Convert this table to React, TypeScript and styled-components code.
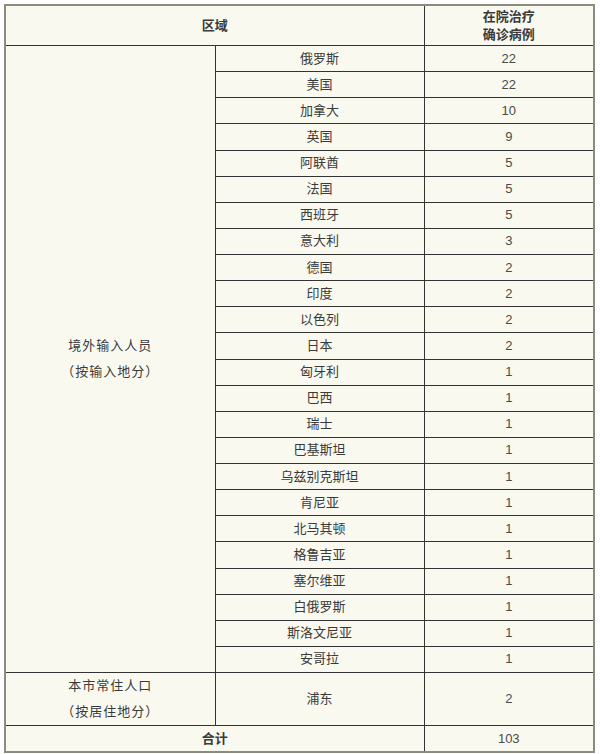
import styled, { createGlobalStyle } from 'styled-components';

const GlobalStyle = createGlobalStyle`
  body {
    margin: 0;
    background: #ffffff;
    font-family: "Liberation Sans", "Noto Sans CJK SC", sans-serif;
  }
`

const Page = styled.div`
  padding: 4px 5px 4px 4px;
`

const Table = styled.table`
  width: 591px;
  border-collapse: collapse;
  background-color: #f9f9ef;
  border: 2px solid #8b8b80;
  color: #3a3a3a;
  font-size: 13px;
  table-layout: fixed;
`

// cell height here excludes the 1px collapsed border
const Cell = styled.td<{ $bold?: boolean; $h?: number }>`
  border: 1px solid #333333;
  text-align: center;
  vertical-align: middle;
  padding: 0;
  height: ${p => p.$h ?? 25.14}px;
  font-weight: ${p => (p.$bold ? 'bold' : 'normal')};
  line-height: 18px;
`

const Region = styled.div`
  line-height: 26px;
  letter-spacing: 1px;
`

const Num = styled.span`
  color: #4a4a4a;
`

const imported: [string, number][] = [
  ['俄罗斯', 22],
  ['美国', 22],
  ['加拿大', 10],
  ['英国', 9],
  ['阿联酋', 5],
  ['法国', 5],
  ['西班牙', 5],
  ['意大利', 3],
  ['德国', 2],
  ['印度', 2],
  ['以色列', 2],
  ['日本', 2],
  ['匈牙利', 1],
  ['巴西', 1],
  ['瑞士', 1],
  ['巴基斯坦', 1],
  ['乌兹别克斯坦', 1],
  ['肯尼亚', 1],
  ['北马其顿', 1],
  ['格鲁吉亚', 1],
  ['塞尔维亚', 1],
  ['白俄罗斯', 1],
  ['斯洛文尼亚', 1],
  ['安哥拉', 1],
];

const App = () => {
  return <Page>
    <GlobalStyle />
    <Table>
      <colgroup>
        <col style={{ width: 210 }} />
        <col style={{ width: 209 }} />
        <col />
      </colgroup>
      <tbody>
        <tr>
          <Cell as="th" colSpan={2} $bold $h={39}>区域</Cell>
          <Cell as="th" $bold $h={39}>在院治疗<br />确诊病例</Cell>
        </tr>
        {imported.map(([name, count], i) => (
          <tr key={name}>
            {i === 0 && (
              <Cell rowSpan={imported.length}>
                <Region>境外输入人员<br />（按输入地分）</Region>
              </Cell>
            )}
            <Cell>{name}</Cell>
            <Cell><Num>{count}</Num></Cell>
          </tr>
        ))}
        <tr>
          <Cell $h={50}>
            <Region>本市常住人口<br />（按居住地分）</Region>
          </Cell>
          <Cell $h={50}>浦东</Cell>
          <Cell $h={50}><Num>2</Num></Cell>
        </tr>
        <tr>
          <Cell colSpan={2} $bold $h={25}>合计</Cell>
          <Cell $h={25}><Num>103</Num></Cell>
        </tr>
      </tbody>
    </Table>
  </Page>
};

export default App;
